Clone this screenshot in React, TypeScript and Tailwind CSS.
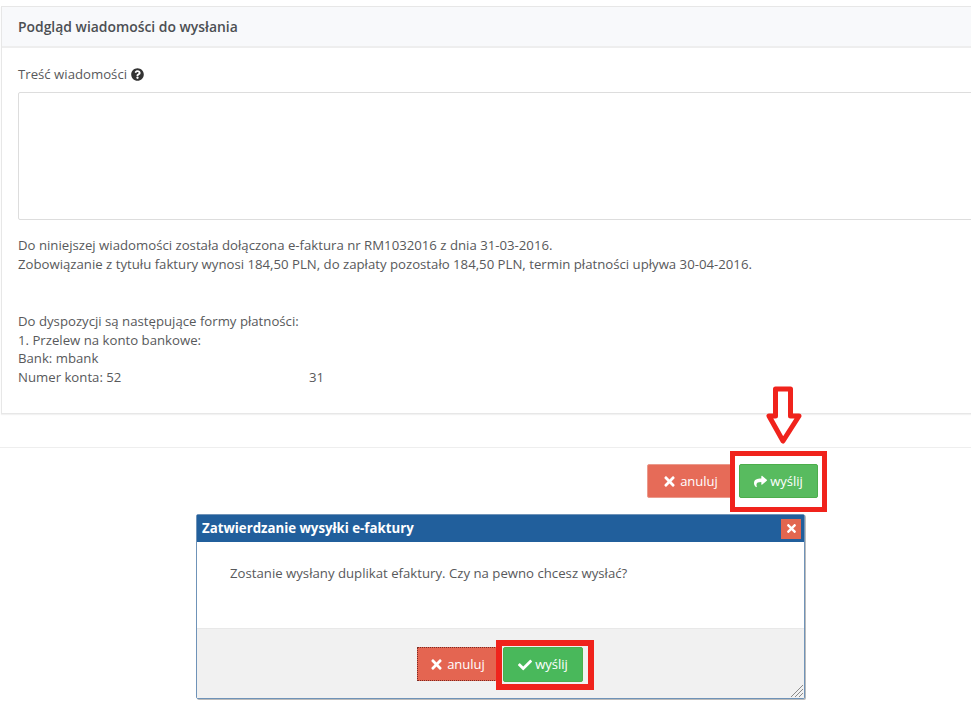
import React from 'react';
import { FaCheck, FaQuestionCircle, FaShare, FaTimes } from 'react-icons/fa';

const App = () => {
  return (
    <div className="relative h-[727px] w-[971px] overflow-hidden bg-white font-['Open_Sans',sans-serif] text-[13.2px] leading-[19px] text-[#58595b]">
      <div className="pt-[6px] pl-[1px]">
        {/* panel */}
        <div className="h-[408px] w-[1000px] border border-[#e7e7e7] shadow-[0_1px_1px_rgba(0,0,0,0.05)]">
          <div className="flex h-[41px] items-center border-b-2 border-[#eeeeee] bg-[#f8f9fb] pl-[16px] text-[13.9px] font-semibold text-[#4c4f53]">
            Podgląd wiadomości do wysłania
          </div>
          <div className="pt-[17px] pl-[16px]">
            <div className="flex h-[19px] items-center gap-[4px]">
              Treść wiadomości
              <FaQuestionCircle className="text-[13px] text-[#333333]" />
            </div>
            <div className="mt-[8px] h-[128px] w-[1000px] rounded-[2px] border border-[#dddddd] bg-white" />
            <div className="mt-[16px] leading-[18.7px]">
              <p>Do niniejszej wiadomości została dołączona e-faktura nr RM1032016 z dnia 31-03-2016.</p>
              <p>Zobowiązanie z tytułu faktury wynosi 184,50 PLN, do zapłaty pozostało 184,50 PLN, termin płatności upływa 30-04-2016.</p>
              <p className="mt-[38.5px]">Do dyspozycji są następujące formy płatności:</p>
              <p>1. Przelew na konto bankowe:</p>
              <p>Bank: mbank</p>
              <div className="flex">
                <span className="w-[291px]">Numer konta: 52</span>
                <span>31</span>
              </div>
            </div>
          </div>
        </div>
      </div>

      <div className="mt-[33px] border-t border-[#eeeeee] pt-[16px]">
        <div className="flex justify-end gap-[6px] pr-[153px]">
          <button className="flex h-[34px] w-[86px] items-center justify-center gap-[3px] rounded-[2px] border border-[#eb9a8c] bg-[#e66b58] text-[13px] text-white">
            <FaTimes className="text-[15px]" />
            anuluj
          </button>
          <button className="flex h-[34px] w-[79px] items-center justify-center gap-[3px] rounded-[2px] border border-[#4cae4c] bg-[#58bb5f] text-[13px] text-white">
            <FaShare className="text-[13px]" />
            wyślij
          </button>
        </div>
      </div>

      {/* confirmation dialog */}
      <div className="absolute top-[514px] left-[196px] flex h-[185px] w-[609px] flex-col rounded-[2px] border border-[#6f93b8] bg-white shadow-[1px_1px_0_#bbbbbb]">
        <div className="flex h-[27px] items-center justify-between bg-[#215f9c] pr-[3px] pl-[5px] text-[13.25px] font-bold text-white">
          Zatwierdzanie wysyłki e-faktury
          <span className="flex h-[20px] w-[20px] items-center justify-center bg-[#e2664f]">
            <FaTimes className="text-[13px]" />
          </span>
        </div>
        <div className="flex h-[59px] items-center pl-[33px] pt-[3px] text-[13.2px]">
          Zostanie wysłany duplikat efaktury. Czy na pewno chcesz wysłać?
        </div>
        <div className="relative mt-[27px] flex-1 border-t border-[#e8e8e8] bg-[#f1f1f1] pt-[18px] pl-[220px]">
          <div className="flex items-start gap-[6px]">
            <button className="flex h-[34px] w-[80px] items-center justify-center gap-[3px] border border-dotted border-[#7d2c22] bg-[#e46551] text-[13px] text-white">
              <FaTimes className="text-[15px]" />
              anuluj
            </button>
            <button className="flex h-[35px] w-[80px] items-center justify-center gap-[3px] rounded-[2px] border border-[#4cae4c] bg-[#49b85b] text-[13px] text-white">
              <FaCheck className="text-[14px]" />
              wyślij
            </button>
          </div>
          <svg className="absolute right-0 bottom-0" width="14" height="14" viewBox="0 0 14 14">
            <path d="M1 13L13 1M5 13L13 5M9 13L13 9" stroke="#8a8a8a" strokeWidth="1" fill="none" />
          </svg>
        </div>
      </div>

      {/* red annotations */}
      <div className="absolute top-[451px] left-[730px] h-[61px] w-[97px] border-[5px] border-[#f0231c]" />
      <div className="absolute top-[640px] left-[496px] h-[50px] w-[98px] border-[6px] border-[#f0231c]" />
      <svg className="absolute top-[386px] left-[765px]" width="38" height="60" viewBox="0 0 38 60">
        <path d="M10.5 3H25.5V30H34L18 55L4 30H10.5Z" fill="white" stroke="#f0231c" strokeWidth="5" strokeLinejoin="round" />
      </svg>
    </div>
  );
};

export default App;
